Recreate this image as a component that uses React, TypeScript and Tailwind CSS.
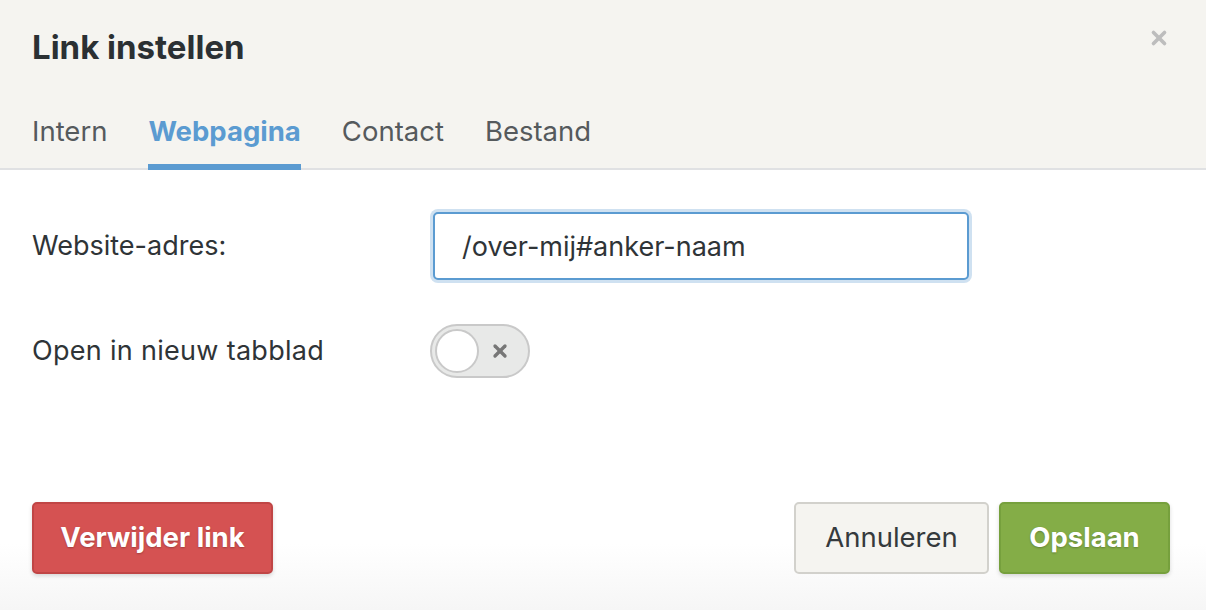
import { X } from "lucide-react";

const tabs = ["Intern", "Webpagina", "Contact", "Bestand"];

export default function App() {
  return (
    <div className="flex h-[610px] w-[1206px] flex-col bg-white font-['Inter',sans-serif] text-[#2f3437]">
      <header className="relative border-b-2 border-[#e0e1e3] bg-[#f5f4f0] pl-8 pr-9">
        <h1 className="pt-[27px] text-[33px] leading-[40px] font-bold text-[#2b3033]">Link instellen</h1>
        <button className="absolute top-[27px] right-[36px] text-[#bdbdbd]">
          <X className="size-[22px]" strokeWidth={4} />
        </button>
        <nav className="mt-[47px] flex gap-[41px]">
          {tabs.map((t) => {
            const active = t === "Webpagina";
            return (
              <div
                key={t}
                className={
                  active
                    ? "-mb-[2px] border-b-[6px] border-[#5b9bd1] pb-[16px] text-[27.5px] leading-[34px] font-bold text-[#5b9bd1]"
                    : "-mb-[2px] border-b-[6px] border-transparent pb-[16px] text-[27.5px] leading-[34px] text-[#555a5d]"
                }
              >
                {t}
              </div>
            );
          })}
        </nav>
      </header>

      <div className="flex flex-1 flex-col bg-gradient-to-b from-white from-[85%] to-[#f6f6f6] pl-8 pr-9">
        <div className="mt-[39px] flex items-center">
          <label className="w-[398px] text-[27px]">Website-adres:</label>
          <div className="rounded-[8px] bg-[#cfe1f1] p-[3px]">
            <input
              readOnly
              value="/over-mij#anker-naam"
              className="h-[68px] w-[536px] rounded-[5px] border-2 border-[#5b9bd1] bg-white px-[27px] text-[27px] text-[#2f3437] outline-none"
            />
          </div>
        </div>

        <div className="mt-[41px] flex items-center">
          <span className="w-[398px] text-[27px] tracking-[0.3px]">Open in nieuw tabblad</span>
          <div className="flex h-[54px] w-[100px] items-center rounded-full border-2 border-[#c9c9c9] bg-[#e8e9e8] pl-[3px]">
            <span className="size-[44px] rounded-full border-2 border-[#c9c9c9] bg-white" />
            <X className="ml-[11px] size-[20px] text-[#777]" strokeWidth={4} />
          </div>
        </div>

        <div className="mt-auto mb-[36px] flex items-center">
          <button className="h-[72px] w-[241px] rounded-[5px] border-2 border-[#c04545] bg-[#d55252] text-[27.5px] font-bold text-white shadow-[0_2px_4px_rgba(0,0,0,0.15)] [text-shadow:0_1px_2px_rgba(0,0,0,0.25)]">
            Verwijder link
          </button>
          <button className="ml-auto h-[72px] w-[195px] rounded-[5px] border-2 border-[#d2d1cc] bg-[#f5f4f0] text-[27.5px] text-[#353a3d]">
            Annuleren
          </button>
          <button className="ml-[10px] h-[72px] w-[171px] rounded-[5px] border-2 border-[#76a03d] bg-[#84ad47] text-[27.5px] font-bold text-white shadow-[0_2px_4px_rgba(0,0,0,0.15)] [text-shadow:0_1px_2px_rgba(0,0,0,0.25)]">
            Opslaan
          </button>
        </div>
      </div>
    </div>
  );
}
